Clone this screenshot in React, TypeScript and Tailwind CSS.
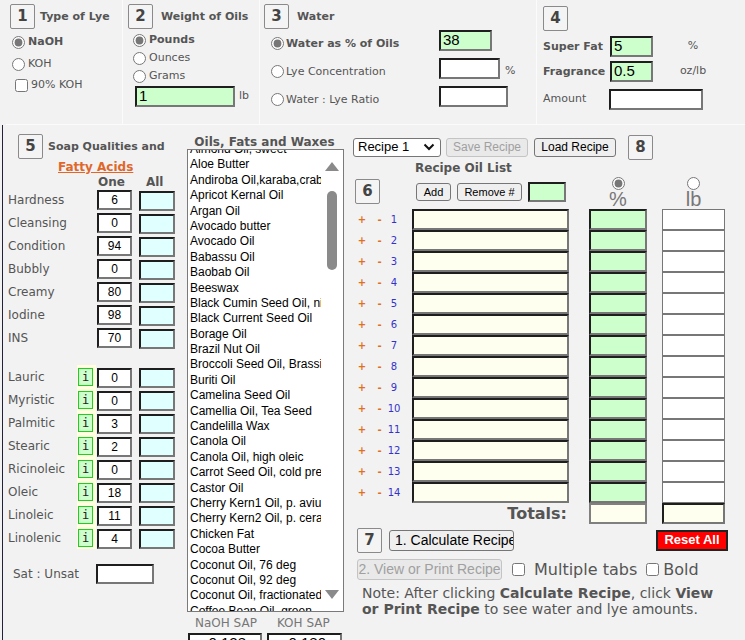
import React from "react";

const V = "font-['DejaVu_Sans',Verdana,sans-serif]";
const A = "font-['Liberation_Sans',Arial,sans-serif]";
const INSET =
  "border-2 border-t-[#1e1e1e] border-l-[#1e1e1e] border-r-[#777] border-b-[#777] outline-none";

const QUALITIES = [
  { label: "Hardness", one: "6" },
  { label: "Cleansing", one: "0" },
  { label: "Condition", one: "94" },
  { label: "Bubbly", one: "0" },
  { label: "Creamy", one: "80" },
  { label: "Iodine", one: "98" },
  { label: "INS", one: "70" },
];

const ACIDS = [
  { label: "Lauric", one: "0" },
  { label: "Myristic", one: "0" },
  { label: "Palmitic", one: "3" },
  { label: "Stearic", one: "2" },
  { label: "Ricinoleic", one: "0" },
  { label: "Oleic", one: "18" },
  { label: "Linoleic", one: "11" },
  { label: "Linolenic", one: "4" },
];

const OILS = [
  "Almond Oil, sweet",
  "Aloe Butter",
  "Andiroba Oil,karaba,crabwood",
  "Apricot Kernal Oil",
  "Argan Oil",
  "Avocado butter",
  "Avocado Oil",
  "Babassu Oil",
  "Baobab Oil",
  "Beeswax",
  "Black Cumin Seed Oil, nigella sativa",
  "Black Current Seed Oil",
  "Borage Oil",
  "Brazil Nut Oil",
  "Broccoli Seed Oil, Brassica Oleracea",
  "Buriti Oil",
  "Camelina Seed Oil",
  "Camellia Oil, Tea Seed",
  "Candelilla Wax",
  "Canola Oil",
  "Canola Oil, high oleic",
  "Carrot Seed Oil, cold pressed",
  "Castor Oil",
  "Cherry Kern1 Oil, p. avium",
  "Cherry Kern2 Oil, p. cerasus",
  "Chicken Fat",
  "Cocoa Butter",
  "Coconut Oil, 76 deg",
  "Coconut Oil, 92 deg",
  "Coconut Oil, fractionated",
  "Coffee Bean Oil, green",
  "Coffee Bean Oil, roasted",
];

export default function App() {
  return (
    <div className={`h-[640px] w-[745px] overflow-hidden bg-[#f2f2f2] text-[#555] ${V}`}>
      <div className="flex h-[124px]">
        <LyePanel />
        <WeightPanel />
        <WaterPanel />
        <SuperFatPanel />
      </div>
      <div className="ml-[6px] h-px bg-[#fbfbfb]" />
      <div className="flex">
        <QualitiesPanel />
        <OilsColumn />
        <RecipePanel />
      </div>
    </div>
  );
}

function Step({ n, className = "" }: { n: string; className?: string }) {
  return (
    <div
      className={`flex h-[25px] w-[25px] shrink-0 items-center justify-center rounded-[2px] border border-[#8a8a8a] bg-[#f4f4f4] text-[15px] font-bold text-[#444] ${V} ${className}`}
    >
      {n}
    </div>
  );
}

function Radio({ checked = false, name }: { checked?: boolean; name: string }) {
  return (
    <input
      type="radio"
      name={name}
      defaultChecked={checked}
      className="h-[13px] w-[13px] shrink-0 accent-[#777]"
    />
  );
}

function LyePanel() {
  return (
    <div className="w-[123px] shrink-0 border-r border-[#fbfbfb] pl-[10px] pt-[4px]">
      <div className="flex items-center gap-[5px]">
        <Step n="1" />
        <span className="pt-[2px] text-[11px] font-bold">Type of Lye</span>
      </div>
      <label className="mt-[2px] flex h-[22px] items-center gap-[3px] pl-[2px]">
        <Radio name="lye" checked />
        <span className="text-[11px] font-bold">NaOH</span>
      </label>
      <label className="flex h-[22px] items-center gap-[3px] pl-[2px]">
        <Radio name="lye" />
        <span className="text-[11px]">KOH</span>
      </label>
      <label className="flex h-[21px] items-center gap-[3px] pl-[5px]">
        <input type="checkbox" className="h-[13px] w-[13px]" />
        <span className="text-[11px]">90% KOH</span>
      </label>
    </div>
  );
}

function WeightPanel() {
  return (
    <div className="w-[137px] shrink-0 border-r border-[#fbfbfb] pl-[5px] pt-[4px]">
      <div className="flex items-center gap-[8px]">
        <Step n="2" />
        <span className="pt-[2px] text-[11px] font-bold">Weight of Oils</span>
      </div>
      <label className="mt-[2px] flex h-[18px] items-center gap-[3px] pl-[5px]">
        <Radio name="weight" checked />
        <span className="text-[11px] font-bold">Pounds</span>
      </label>
      <label className="flex h-[18px] items-center gap-[3px] pl-[5px]">
        <Radio name="weight" />
        <span className="text-[11px]">Ounces</span>
      </label>
      <label className="flex h-[18px] items-center gap-[3px] pl-[5px]">
        <Radio name="weight" />
        <span className="text-[11px]">Grams</span>
      </label>
      <div className="mt-[1px] flex items-center gap-[4px] pl-[7px]">
        <input
          defaultValue="1"
          className={`h-[21px] w-[100px] bg-[#ccffcc] px-[2px] text-[15px] text-black ${A} ${INSET}`}
        />
        <span className="text-[11px]">lb</span>
      </div>
    </div>
  );
}

function WaterPanel() {
  const rows = [
    { label: "Water as % of Oils", bold: true, checked: true, value: "38", w: "w-[53px]", green: true },
    { label: "Lye Concentration", bold: false, checked: false, value: "", w: "w-[61px]", green: false, unit: "%" },
    { label: "Water : Lye Ratio", bold: false, checked: false, value: "", w: "w-[69px]", green: false },
  ];
  return (
    <div className="w-[277px] shrink-0 border-r border-[#fbfbfb] pl-[4px] pt-[4px]">
      <div className="flex items-center gap-[8px]">
        <Step n="3" />
        <span className="pt-[2px] text-[11px] font-bold">Water</span>
      </div>
      <div className="mt-[1px] flex flex-col gap-[4px]">
        {rows.map((r) => (
          <div key={r.label} className="flex items-start">
            <label className="mt-[3px] flex h-[21px] w-[175px] items-center gap-[2px] pl-[7px]">
              <Radio name="water" checked={r.checked} />
              <span className={`pt-[1px] text-[11px] ${r.bold ? "font-bold" : ""}`}>{r.label}</span>
            </label>
            <input
              defaultValue={r.value}
              className={`h-[21px] ${r.w} px-[2px] text-[15px] text-black ${A} ${INSET} ${
                r.green ? "bg-[#ccffcc]" : "bg-white"
              }`}
            />
            {r.unit && <span className="ml-[5px] mt-[5px] text-[11px]">{r.unit}</span>}
          </div>
        ))}
      </div>
    </div>
  );
}

function SuperFatPanel() {
  return (
    <div className="flex-1 pl-[6px] pt-[6px]">
      <Step n="4" />
      <div className="mt-[5px] flex items-center">
        <span className="w-[67px] pt-[1px] text-[11px] font-bold">Super Fat</span>
        <input
          defaultValue="5"
          className={`h-[21px] w-[43px] bg-[#ccffcc] px-[2px] text-[15px] text-black ${A} ${INSET}`}
        />
        <span className="w-[80px] text-center text-[11px]">%</span>
      </div>
      <div className="mt-[4px] flex items-center">
        <span className="w-[67px] pt-[1px] text-[11px] font-bold">Fragrance</span>
        <input
          defaultValue="0.5"
          className={`h-[21px] w-[43px] bg-[#ccffcc] px-[2px] text-[15px] text-black ${A} ${INSET}`}
        />
        <span className="w-[80px] text-center text-[11px]">oz/lb</span>
      </div>
      <div className="mt-[7px] flex items-center">
        <span className="w-[66px] text-[11px]">Amount</span>
        <input className={`h-[21px] w-[94px] bg-white px-[2px] text-[15px] text-black ${A} ${INSET}`} />
      </div>
    </div>
  );
}

function SmallBox({ value, cyan = false, w = "w-[35px]" }: { value?: string; cyan?: boolean; w?: string }) {
  return (
    <input
      defaultValue={value}
      className={`h-[20px] ${w} text-center text-[12px] text-black ${A} ${INSET} ${
        cyan ? "bg-[#e0ffff]" : "bg-white"
      }`}
    />
  );
}

function QualitiesPanel() {
  return (
    <div className="ml-[2px] w-[185px] shrink-0 border-l border-[#22223a] pt-[9px]">
      <div className="flex items-center gap-[5px] pl-[15px]">
        <Step n="5" />
        <span className="pt-[2px] text-[11px] font-bold">Soap Qualities and</span>
      </div>
      <div className="flex h-[16px] items-center pl-[55px]">
        <span className="text-[12px] font-bold text-[#e0662a] underline">Fatty Acids</span>
      </div>
      <div className="flex h-[13px] items-center text-[12px] font-bold leading-none">
        <span className="ml-[95px]">One</span>
        <span className="ml-[21px]">All</span>
      </div>
      <div>
        {QUALITIES.map((q) => (
          <div key={q.label} className="flex h-[23px] items-center">
            <span className="w-[94px] pl-[5px] text-[12px]">{q.label}</span>
            <SmallBox value={q.one} />
            <div className="ml-[7px]">
              <SmallBox cyan w="w-[36px]" />
            </div>
          </div>
        ))}
      </div>
      <div className="mt-[16px]">
        {ACIDS.map((q) => (
          <div key={q.label} className="flex h-[23px] items-center">
            <span className="w-[74px] pl-[5px] text-[12px]">{q.label}</span>
            <div className="flex w-[19px] items-center self-stretch bg-[#ffffe0] pl-[1px]">
              <span className="flex h-[18px] w-[15px] items-center justify-center border border-[#22cc22] bg-[#ccffcc] font-['DejaVu_Sans_Mono',monospace] text-[12px] text-[#222]">
                i
              </span>
            </div>
            <div className="ml-[1px]">
              <SmallBox value={q.one} />
            </div>
            <div className="ml-[7px]">
              <SmallBox cyan w="w-[36px]" />
            </div>
          </div>
        ))}
      </div>
      <div className="mt-[15px] flex h-[20px] items-center">
        <span className="w-[93px] pl-[10px] text-[12px]">Sat : Unsat</span>
        <SmallBox w="w-[58px]" />
      </div>
    </div>
  );
}

function OilsColumn() {
  return (
    <div className="w-[158px] shrink-0">
      <div className="flex h-[24px] items-end justify-center pb-[1px] pr-[3px] text-[12px] font-bold leading-none">
        Oils, Fats and Waxes
      </div>
      <div className="flex h-[463px] w-[157px] border border-[#7a7a7a] bg-white">
        <div className="w-[133px] overflow-hidden">
          <div className="-mt-[8px]">
            {OILS.map((oil) => (
              <div
                key={oil}
                className={`h-[15.4px] whitespace-nowrap pl-[2px] text-[12px] leading-[15.4px] text-black ${A}`}
              >
                {oil}
              </div>
            ))}
          </div>
        </div>
        <div className="flex flex-1 flex-col items-center pb-[12px] pt-[12px]">
          <svg width="14" height="9" viewBox="0 0 14 9">
            <polygon points="7,0 14,9 0,9" fill="#8a8a8a" />
          </svg>
          <div className="mt-[20px] h-[79px] w-[10px] rounded-full bg-[#8a8a8a]" />
          <div className="flex-1" />
          <svg width="14" height="9" viewBox="0 0 14 9">
            <polygon points="0,0 14,0 7,9" fill="#8a8a8a" />
          </svg>
        </div>
      </div>
      <div className="flex h-[21px] items-center text-[12px] text-[#777]">
        <span className="ml-[8px]">NaOH SAP</span>
        <span className="ml-[20px]">KOH SAP</span>
      </div>
      <div className="flex gap-[5px] pl-[1px]">
        <input
          defaultValue="0.128"
          className={`h-[21px] w-[74px] bg-white pr-[14px] text-right text-[15px] text-black ${A} ${INSET}`}
        />
        <input
          defaultValue="0.180"
          className={`h-[21px] w-[75px] bg-white pr-[14px] text-right text-[15px] text-black ${A} ${INSET}`}
        />
      </div>
    </div>
  );
}

function Btn({
  children,
  className = "",
  disabled = false,
}: {
  children: React.ReactNode;
  className?: string;
  disabled?: boolean;
}) {
  return (
    <button
      disabled={disabled}
      className={`flex items-center justify-center whitespace-nowrap rounded-[3px] border ${A} ${
        disabled
          ? "border-[#c4c4c4] bg-[#e9e9e9] text-[#a0a0a0]"
          : "border-[#767676] bg-[#efefef] text-black"
      } ${className}`}
    >
      {children}
    </button>
  );
}

function RecipePanel() {
  const rows = Array.from({ length: 14 }, (_, i) => i + 1);
  return (
    <div className="flex-1 pt-[10px]">
      <div className="flex h-[24px] items-center pl-[8px]">
        <div
          className={`flex h-[19px] w-[88px] items-center justify-between rounded-[3px] border border-[#767676] bg-white pl-[4px] pr-[5px] text-[13px] text-black ${A}`}
        >
          <span>Recipe 1</span>
          <svg width="12" height="8" viewBox="0 0 12 8">
            <polyline points="1.5,1.5 6,6 10.5,1.5" fill="none" stroke="#111" strokeWidth="2" />
          </svg>
        </div>
        <Btn disabled className="ml-[5px] h-[19px] w-[82px] text-[12px]">
          Save Recipe
        </Btn>
        <Btn className="ml-[6px] h-[19px] w-[82px] text-[12px]">Load Recipe</Btn>
        <Step n="8" className="ml-[12px]" />
      </div>
      <div className="flex h-[18px] items-center pl-[70px] text-[12px] font-bold">Recipe Oil List</div>
      <div className="flex h-[32px]">
        <div className="w-[67px] pl-[10px] pt-[2px]">
          <Step n="6" />
        </div>
        <div className="flex w-[177px] items-start pl-[4px] pt-[6px]">
          <Btn className="h-[18px] w-[35px] text-[11px]">Add</Btn>
          <Btn className="ml-[6px] h-[18px] w-[65px] text-[11px]">Remove #</Btn>
          <input className={`-mt-[1px] ml-[6px] h-[20px] w-[38px] bg-[#ccffcc] ${INSET}`} />
        </div>
        <div className="flex w-[58px] flex-col items-center">
          <Radio name="unit" checked />
          <span className={`text-[20px] leading-[19px] text-[#777] ${A}`}>%</span>
        </div>
        <div className="ml-[15px] flex w-[63px] flex-col items-center">
          <Radio name="unit" />
          <span className={`text-[20px] leading-[19px] text-[#777] ${A}`}>lb</span>
        </div>
      </div>
      <div>
        {rows.map((n) => (
          <div key={n} className="flex h-[21px] items-center">
            <div className="flex w-[67px] items-center pl-[10px] text-[10px] font-bold">
              <span className="w-[14px] text-center text-[#e07020]">+</span>
              <span className="ml-[3px] w-[15px] text-center text-[#e07020]">-</span>
              <span className="w-[14px] text-center font-normal text-[#3333cc]">{n}</span>
            </div>
            <input className={`h-[21px] w-[157px] bg-[#fffff0] ${INSET}`} />
            <input className={`ml-[20px] h-[21px] w-[58px] bg-[#ccffcc] ${INSET}`} />
            <input className="ml-[15px] h-[21px] w-[63px] border border-[#777] bg-white outline-none" />
          </div>
        ))}
      </div>
      <div className="flex h-[21px] items-center">
        <span className="w-[223px] pr-[1px] text-right text-[16px] font-bold">Totals:</span>
        <input className="ml-[21px] h-[21px] w-[58px] border-2 border-[#808080] bg-[#fffff0] outline-none" />
        <input className={`ml-[15px] h-[21px] w-[63px] bg-[#fffff0] ${INSET}`} />
      </div>
      <div className="mt-[4px] flex h-[24px] items-center pl-[12px]">
        <Step n="7" />
        <Btn className="ml-[7px] h-[21px] w-[125px] justify-start overflow-hidden pl-[5px] text-[14px]">
          1. Calculate Recipe
        </Btn>
        <button
          className={`ml-[142px] flex h-[21px] w-[72px] items-center justify-center border-2 border-[#222] bg-[#ff0000] text-[13px] font-bold text-white ${A}`}
        >
          Reset All
        </button>
      </div>
      <div className="mt-[7px] flex h-[21px] items-center pl-[12px]">
        <Btn disabled className="h-[21px] w-[145px] text-[14px]">
          2. View or Print Recipe
        </Btn>
        <input type="checkbox" className="ml-[10px] h-[13px] w-[13px]" />
        <span className="ml-[9px] text-[16px]">Multiple tabs</span>
        <input type="checkbox" className="ml-[9px] h-[13px] w-[13px]" />
        <span className="ml-[4px] text-[16px]">Bold</span>
      </div>
      <div className="mt-[5px] pl-[17px] text-[14px] leading-[16px]">
        <div className="whitespace-nowrap">
          Note: After clicking <b>Calculate Recipe</b>, click <b>View</b>
        </div>
        <div className="whitespace-nowrap">
          <b>or Print Recipe</b> to see water and lye amounts.
        </div>
      </div>
    </div>
  );
}
